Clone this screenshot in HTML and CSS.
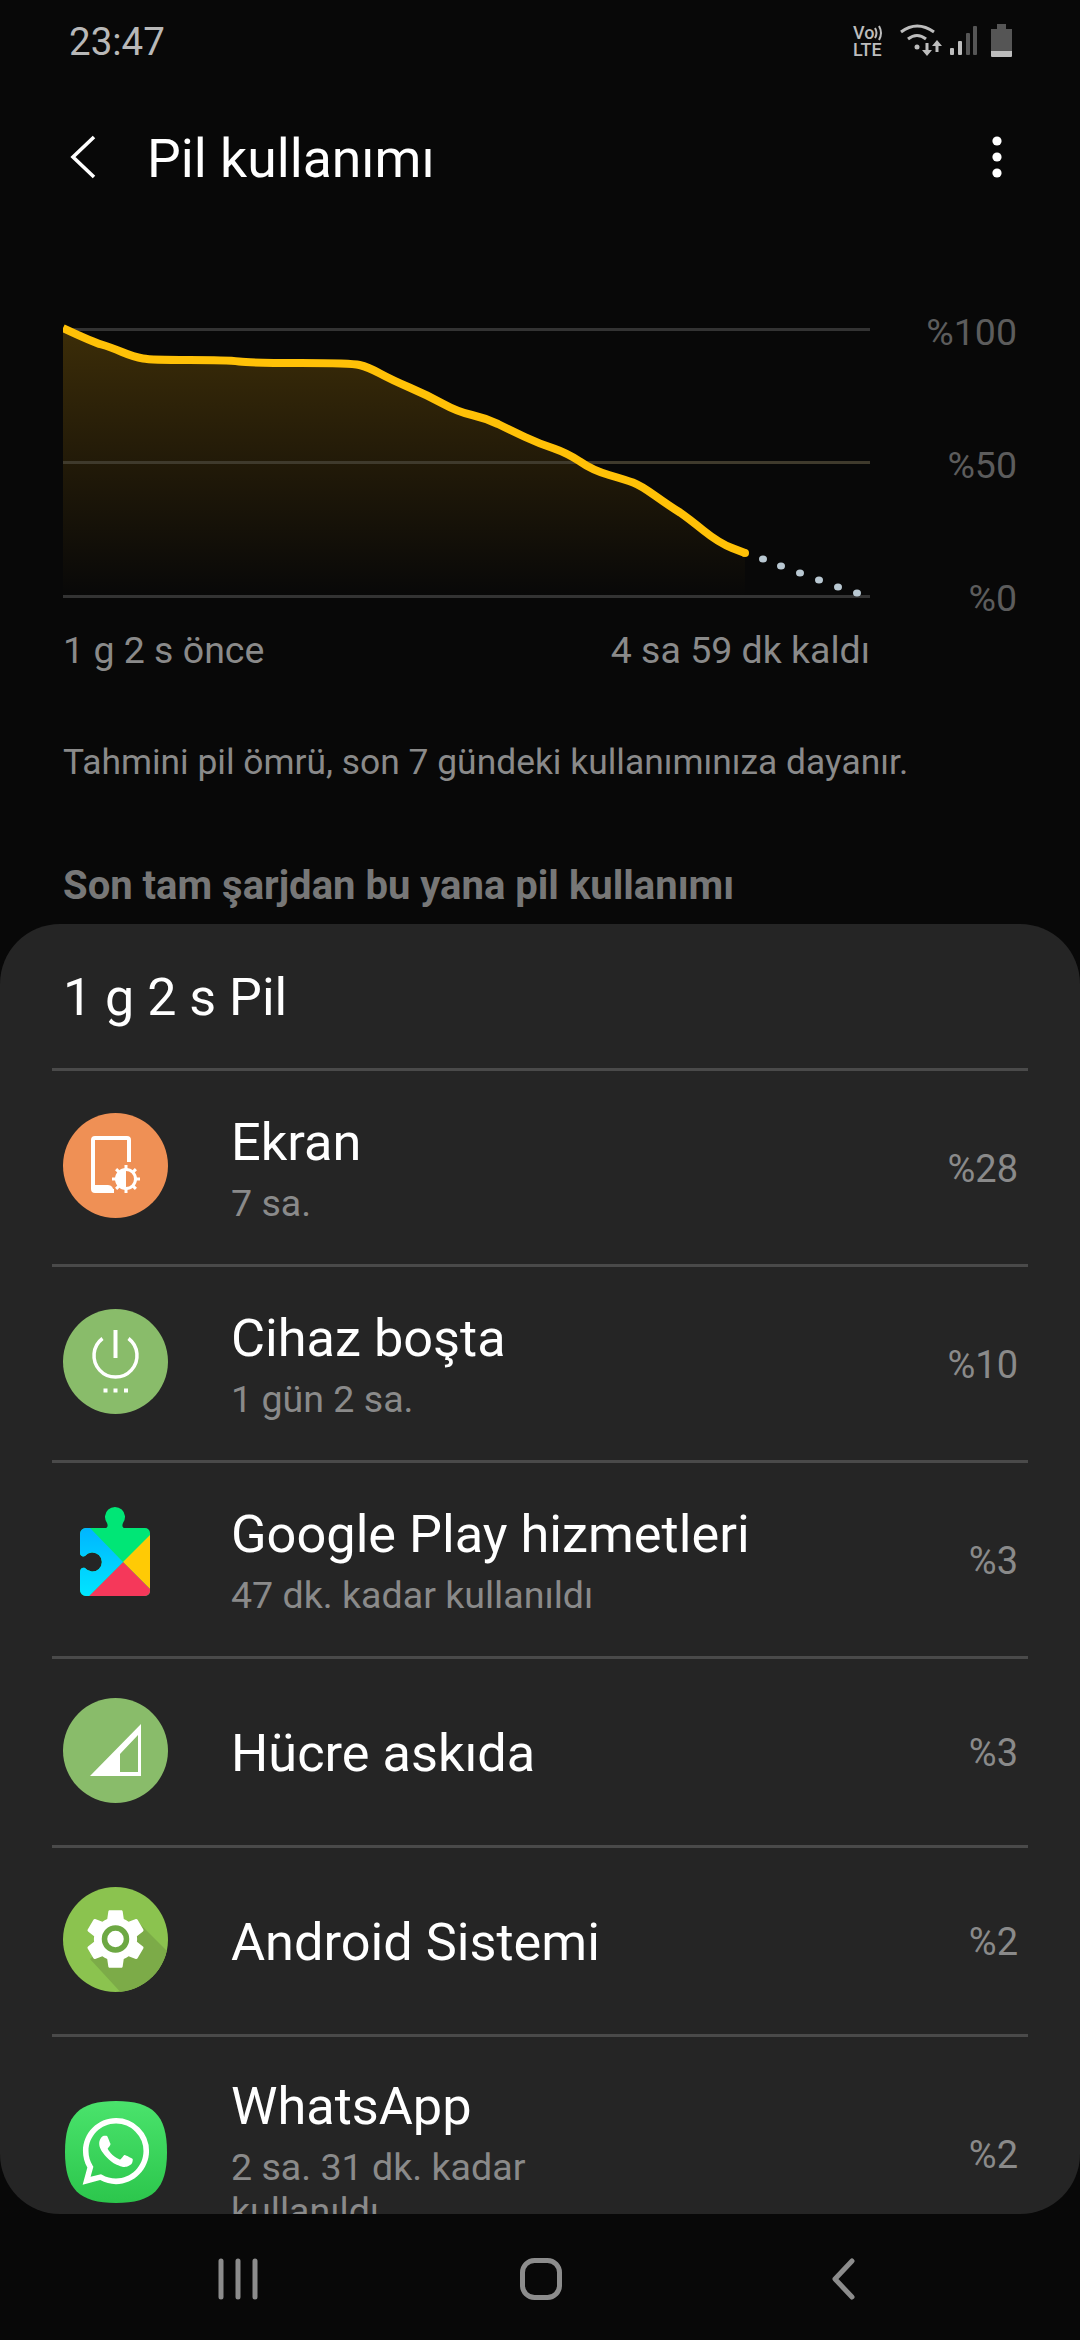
FILE: index.html
```html
<!DOCTYPE html>
<html lang="tr">
<head>
<meta charset="utf-8">
<title>Pil kullanımı</title>
<link rel="stylesheet" href="styles.css">
</head>
<body>
<div class="screen">
  <div class="status">
    <span class="time">23:47</span>
    <svg class="status-icons" width="170" height="84" viewBox="850 0 170 84">
      <text class="st-text"><tspan x="852" y="39">Vo</tspan><tspan x="852" y="56">LTE</tspan></text>
      <g fill="none" stroke="#bdbdbd" stroke-width="2">
        <path d="M874 28q3 5 0 10"/><path d="M878 26q4 7 0 14"/>
      </g>
      <g fill="none" stroke="#bdbdbd" stroke-width="3">
        <path d="M900 32q16-12 33 0"/><path d="M907 39q9-7 18 0"/>
      </g>
      <circle cx="916" cy="47" r="2.5" fill="#bdbdbd"/>
      <path d="M924.500 43h3v7h3.500l-5 6-5-6h3.500zM934.500 52h3v-6h3.500l-5-6-5 6h3.500z" fill="#bdbdbd"/>
      <rect x="949" y="48" width="4" height="7" rx="1" fill="#bdbdbd"/>
      <rect x="957" y="41" width="4" height="14" rx="1" fill="#bdbdbd"/>
      <rect x="965" y="33" width="4" height="22" rx="1" fill="#555"/>
      <rect x="972" y="26" width="4" height="29" rx="1" fill="#555"/>
      <path d="M996 24h9v5h6v22h-21v-22h6z" fill="#555"/>
      <path d="M990 51h21v5a1 1 0 0 1-1 1h-19a1 1 0 0 1-1-1z" fill="#bdbdbd"/>
    </svg>
  </div>

  <header class="topbar">
    <svg class="back" width="26" height="44" viewBox="0 0 26 44"><path d="M24 2 3 22l21 20" fill="none" stroke="#fff" stroke-width="3.600"/></svg>
    <h1 class="title">Pil kullanımı</h1>
    <svg class="more" width="12" height="44" viewBox="0 0 12 44"><circle cx="6" cy="6" r="4.600"/><circle cx="6" cy="22" r="4.600"/><circle cx="6" cy="38" r="4.600"/></svg>
  </header>

  <section class="chart-row">
    <svg class="chart" width="807" height="290" viewBox="63 310 807 290">
      <defs>
        <linearGradient id="area" x1="0" y1="0" x2="0" y2="1">
          <stop offset="0" stop-color="#3c2d08"/>
          <stop offset="0.5" stop-color="#221a08"/>
          <stop offset="1" stop-color="#080808"/>
        </linearGradient>
      </defs>
      <path d="M63 328Q93 342 101.500 344.500Q110 347 122 352Q134 357 143 358.500Q151 360 189 360Q227 360 239 361.500Q251 363 301 363Q351 363 359.500 365Q368 367 380 373.500Q392 380 409.500 387.500Q427 395 442.500 403.500Q458 412 472 415Q485 418 498 424Q510 430 525 437Q540 444 554 448.500Q567 453 580 461.500Q592 470 609 475Q626 480 633 482.500Q640 485 655.500 496Q671 507 680 512.500Q688 518 703.500 530.500Q719 543 732 548Q745 553 745 553V596H63Z" fill="url(#area)"/>
      <g class="grid-lines">
        <rect x="63" y="328" width="807" height="3"/>
        <rect x="63" y="461" width="807" height="3" class="mid"/>
        <rect x="63" y="595" width="807" height="3"/>
      </g>
      <path d="M63 328Q93 342 101.500 344.500Q110 347 122 352Q134 357 143 358.500Q151 360 189 360Q227 360 239 361.500Q251 363 301 363Q351 363 359.500 365Q368 367 380 373.500Q392 380 409.500 387.500Q427 395 442.500 403.500Q458 412 472 415Q485 418 498 424Q510 430 525 437Q540 444 554 448.500Q567 453 580 461.500Q592 470 609 475Q626 480 633 482.500Q640 485 655.500 496Q671 507 680 512.500Q688 518 703.500 530.500Q719 543 732 548L745 553" fill="none" stroke="#ffc107" stroke-width="8" stroke-linejoin="round"/>
      <circle cx="745" cy="553" r="4" fill="#ffc107"/>
      <g fill="#b9c8d2">
        <ellipse cx="763" cy="559" rx="4" ry="3.500"/><ellipse cx="781" cy="566" rx="4" ry="3.500"/><ellipse cx="800" cy="573" rx="4" ry="3.500"/><ellipse cx="819" cy="580" rx="4" ry="3.500"/><ellipse cx="838" cy="587" rx="4" ry="3.500"/><ellipse cx="857" cy="593" rx="4" ry="3.500"/>
      </g>
    </svg>
    <div class="axis">
      <span>%100</span>
      <span>%50</span>
      <span>%0</span>
    </div>
  </section>

  <div class="chart-labels">
    <span>1 g 2 s önce</span>
    <span>4 sa 59 dk kaldı</span>
  </div>

  <p class="note">Tahmini pil ömrü, son 7 gündeki kullanımınıza dayanır.</p>
  <h2 class="since">Son tam şarjdan bu yana pil kullanımı</h2>

  <section class="sheet">
    <div class="sheet-title">1 g 2 s Pil</div>

    <div class="row">
      <svg class="icon" width="105" height="105" viewBox="0 0 105 105">
        <circle cx="52.500" cy="52.500" r="52.500" fill="#ef9055"/>
        <path d="M66 49V27a2 2 0 0 0-2-2H32a2 2 0 0 0-2 2v49a2 2 0 0 0 2 2h19" fill="none" stroke="#fff" stroke-width="4"/>
        <path d="M30 72h15q5 0 6 7H32a2 2 0 0 1-2-2z" fill="#fff"/>
        <circle cx="63" cy="66" r="9.500" fill="#ef9055" stroke="#fff" stroke-width="3"/>
        <path d="M63 56.500a9.500 9.500 0 0 0 0 19z" fill="#fff"/>
        <path d="M63 52v5M63 75v5M49 66h5M72 66h5M53.100 56.100l3.500 3.500M69.400 72.400l3.500 3.500M72.900 56.100l-3.500 3.500M56.600 72.400l-3.500 3.500" stroke="#fff" stroke-width="3"/>
      </svg>
      <div class="text">
        <div class="name">Ekran</div>
        <div class="sub">7 sa.</div>
      </div>
      <div class="pct">%28</div>
    </div>

    <div class="row">
      <svg class="icon" width="105" height="105" viewBox="0 0 105 105">
        <circle cx="52.500" cy="52.500" r="52.500" fill="#89bc6a"/>
        <path d="M39.500 29.500a21.500 21.500 0 1 0 26 0" fill="none" stroke="#fff" stroke-width="3.500"/>
        <path d="M52.500 21v28" stroke="#fff" stroke-width="4"/>
        <path d="M40.500 79.500h4v4h-4zM50.500 79.500h4v4h-4zM61 79.500h4v4h-4z" fill="#fff"/>
      </svg>
      <div class="text">
        <div class="name">Cihaz boşta</div>
        <div class="sub">1 gün 2 sa.</div>
      </div>
      <div class="pct">%10</div>
    </div>

    <div class="row">
      <svg class="icon" width="105" height="105" viewBox="0 0 105 105">
        <defs>
          <clipPath id="puzzle">
            <path d="M23 22H42C45 22 45 19 44 17A10 10 0 1 1 60 17C59 19 59 22 62 22H82A5 5 0 0 1 87 27V85A5 5 0 0 1 82 90H23A6 6 0 0 1 17 84V66C17 62 20 61 22 62A9.500 9.500 0 1 0 22 50C20 51 17 50 17 47V28A6 6 0 0 1 23 22Z"/>
          </clipPath>
          <linearGradient id="gps-blue" x1="0" y1="0" x2="0" y2="1">
            <stop offset="0" stop-color="#00b0ff"/><stop offset="1" stop-color="#00e5ff"/>
          </linearGradient>
        </defs>
        <g clip-path="url(#puzzle)" transform="translate(0 1)">
          <rect x="10" y="0" width="85" height="95" fill="#00e676"/>
          <path d="M87 29 60 56l27 27z" fill="#ffca05"/>
          <path d="M60 56 26 90H80h10V86z" fill="#f5385a"/>
          <path d="M10 15H20L27 22 60 56 26 90H10z" fill="url(#gps-blue)"/>
        </g>
      </svg>
      <div class="text">
        <div class="name">Google Play hizmetleri</div>
        <div class="sub">47 dk. kadar kullanıldı</div>
      </div>
      <div class="pct">%3</div>
    </div>

    <div class="row row-single">
      <svg class="icon" width="105" height="105" viewBox="0 0 105 105">
        <circle cx="52.500" cy="52.500" r="52.500" fill="#89bc6a"/>
        <path fill-rule="evenodd" d="M27 78 78 26V78ZM57 74H75V37L57 56Z" fill="#fff"/>
      </svg>
      <div class="text">
        <div class="name">Hücre askıda</div>
      </div>
      <div class="pct">%3</div>
    </div>

    <div class="row row-single">
      <svg class="icon" width="105" height="105" viewBox="0 0 105 105">
        <defs><clipPath id="gear-disc"><circle cx="52.500" cy="52.500" r="52.500"/></clipPath></defs>
        <circle cx="52.500" cy="52.500" r="52.500" fill="#8bc34f"/>
        <path clip-path="url(#gear-disc)" d="M72 32 110 70V110H62L27 72Z" fill="#7cab48"/>
        <path transform="translate(16.500 16) scale(3)" d="M19.140 12.940c.04-.3.06-.61.06-.94 0-.32-.02-.64-.07-.94l2.030-1.580c.18-.14.23-.41.12-.61l-1.920-3.320c-.12-.22-.37-.29-.59-.22l-2.390.96c-.5-.38-1.030-.7-1.620-.94l-.36-2.540c-.04-.24-.24-.41-.48-.41h-3.840c-.24 0-.43.17-.47.41l-.36 2.540c-.59.24-1.130.57-1.620.94l-2.390-.96c-.22-.08-.47 0-.59.22L2.740 8.870c-.12.21-.08.47.12.61l2.030 1.580c-.05.3-.09.63-.09.94s.02.64.07.94l-2.030 1.580c-.18.14-.23.41-.12.61l1.920 3.320c.12.22.37.29.59.22l2.390-.96c.5.38 1.030.7 1.620.94l.36 2.540c.05.24.24.41.48.41h3.840c.24 0 .44-.17.47-.41l.36-2.540c.59-.24 1.130-.56 1.620-.94l2.390.96c.22.08.47 0 .59-.22l1.920-3.320c.12-.22.07-.47-.12-.61l-2.010-1.580z" fill="#fff"/>
        <circle cx="52.500" cy="52" r="11" fill="#fff" stroke="#6da843" stroke-width="5.500"/>
      </svg>
      <div class="text">
        <div class="name">Android Sistemi</div>
      </div>
      <div class="pct">%2</div>
    </div>

    <div class="row row-last">
      <svg class="icon icon-wa" width="102" height="102" viewBox="0 0 102 102">
        <defs>
          <linearGradient id="wa" x1="0" y1="0" x2="0" y2="1">
            <stop offset="0" stop-color="#4ae36c"/><stop offset="1" stop-color="#2cc64c"/>
          </linearGradient>
        </defs>
        <path d="M51 0C88 0 102 14 102 51 102 88 88 102 51 102 14 102 0 88 0 51 0 14 14 0 51 0Z" fill="url(#wa)"/>
        <path transform="translate(17.500 17) scale(2.780)" fill="#fff" d="M17.472 14.382c-.297-.149-1.758-.867-2.030-.967-.273-.099-.471-.148-.67.15-.197.297-.767.966-.94 1.164-.173.199-.347.223-.644.075-.297-.15-1.255-.463-2.390-1.475-.883-.788-1.480-1.761-1.653-2.059-.173-.297-.018-.458.13-.606.134-.133.298-.347.446-.52.149-.174.198-.298.298-.497.099-.198.05-.371-.025-.52-.075-.149-.669-1.612-.916-2.207-.242-.579-.487-.5-.669-.51-.173-.008-.371-.01-.57-.01-.198 0-.52.074-.792.372-.272.297-1.040 1.016-1.040 2.479 0 1.462 1.065 2.875 1.213 3.074.149.198 2.096 3.200 5.077 4.487.709.306 1.262.489 1.694.625.712.227 1.360.195 1.871.118.571-.085 1.758-.719 2.006-1.413.248-.694.248-1.289.173-1.413-.074-.124-.272-.198-.57-.347m-5.421 7.403h-.004a9.870 9.870 0 01-5.031-1.378l-.361-.214-3.741.982.998-3.648-.235-.374a9.860 9.860 0 01-1.510-5.260c.001-5.450 4.436-9.884 9.888-9.884 2.640 0 5.122 1.030 6.988 2.898a9.825 9.825 0 012.893 6.994c-.003 5.450-4.437 9.884-9.885 9.884m8.413-18.297A11.815 11.815 0 0012.050 0C5.495 0 .16 5.335.157 11.892c0 2.096.547 4.142 1.588 5.945L.057 24l6.305-1.654a11.882 11.882 0 005.683 1.448h.005c6.554 0 11.890-5.335 11.893-11.893a11.821 11.821 0 00-3.480-8.413z"/>
      </svg>
      <div class="text">
        <div class="name">WhatsApp</div>
        <div class="sub">2 sa. 31 dk. kadar kullanıldı</div>
      </div>
      <div class="pct">%2</div>
    </div>
  </section>

  <nav class="nav">
    <svg width="44" height="44" viewBox="0 0 44 44"><path d="M5 4v36M22 4v36M39 4v36" stroke="#8c8c8c" stroke-width="5" stroke-linecap="round"/></svg>
    <svg width="44" height="44" viewBox="0 0 44 44"><rect x="3.500" y="3.500" width="37" height="37" rx="12" fill="none" stroke="#8c8c8c" stroke-width="5"/></svg>
    <svg width="30" height="44" viewBox="0 0 30 44"><path d="M24 4 7 22l17 18" fill="none" stroke="#8c8c8c" stroke-width="5" stroke-linecap="round" stroke-linejoin="round"/></svg>
  </nav>
</div>
</body>
</html>
```
FILE: styles.css
```css
* { box-sizing: border-box; }
html, body { margin: 0; padding: 0; background: #080808; }
.screen {
  width: 1080px;
  height: 2340px;
  overflow: hidden;
  display: flex;
  flex-direction: column;
  background: #080808;
  font-family: Roboto, "Noto Sans", sans-serif;
  color: #fff;
}
.status {
  height: 84px;
  flex: none;
  display: flex;
  align-items: center;
  justify-content: space-between;
  padding: 0 59px 0 69px;
}
.time { font-size: 38.500px; line-height: 44px; color: #b8b8b8; }
.status-icons { display: block; }
.st-text { font-family: Roboto, sans-serif; font-size: 18px; font-weight: 500; fill: #bdbdbd; }

.topbar {
  height: 146px;
  flex: none;
  display: flex;
  align-items: center;
  padding: 0 77px 0 70px;
}
.back { flex: none; margin-right: 51px; }
.title { margin: 0; flex: 1; padding-top: 3px; font-size: 53.500px; line-height: 60px; font-weight: 400; color: #fff; }
.more { flex: none; fill: #fff; }

.chart-row {
  margin-top: 80px;
  flex: none;
  height: 290px;
  display: flex;
  padding-left: 63px;
}
.chart { display: block; flex: none; }
.grid-lines rect { fill: #333; }
.grid-lines .mid { fill: #3f3a2c; }
.axis {
  width: 147px;
  flex: none;
  display: flex;
  flex-direction: column;
  align-items: flex-end;
  gap: 89px;
  font-size: 37.500px;
  line-height: 44px;
  color: #5c5c5c;
}
.chart-labels {
  margin: 28px 0 0 63px;
  width: 807px;
  flex: none;
  display: flex;
  justify-content: space-between;
  font-size: 37.500px;
  line-height: 44px;
  color: #8a8a8a;
}
.note {
  margin: 68px 0 0 63px;
  flex: none;
  font-size: 35.400px;
  line-height: 44px;
  color: #8a8a8a;
}
.since {
  margin: 80px 0 16px 63px;
  flex: none;
  font-size: 40px;
  line-height: 44px;
  font-weight: 700;
  color: #777;
}

.sheet {
  flex: 1;
  min-height: 0;
  overflow: hidden;
  background: #252525;
  border-radius: 60px;
  padding: 0 52px;
}
.sheet-title {
  padding: 44px 11px 40px;
  font-size: 52px;
  line-height: 60px;
  color: #fff;
}
.row {
  height: 196px;
  border-top: 3px solid #4a4a4a;
  display: flex;
  align-items: center;
  padding: 0 10px 4px 11px;
}
.row-single { height: 189px; }
.row-last { height: 236px; }
.icon { flex: none; display: block; }
.icon-wa { margin: 0 1px 0 2px; }
.text { flex: 1; min-width: 0; padding: 5px 0 0 63px; }
.name { font-size: 52.300px; line-height: 60px; color: #fff; }
.sub {
  margin-top: 9px;
  max-width: 420px;
  font-size: 37.600px;
  line-height: 44px;
  color: #8a8a8a;
}
.pct { flex: none; padding-top: 6px; font-size: 38px; line-height: 44px; color: #8a8a8a; }

.nav {
  height: 126px;
  flex: none;
  display: grid;
  grid-template-columns: repeat(3, 302.5px);
  padding: 3px 0 0 87px;
  align-items: center;
  justify-items: center;
}
.nav svg { display: block; }
```
